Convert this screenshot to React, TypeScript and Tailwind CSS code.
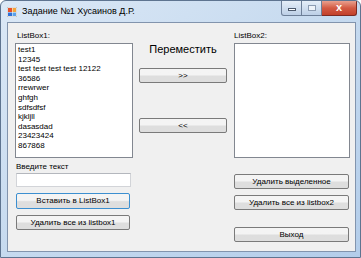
import type { ReactNode } from 'react';

const items = [
  'test1',
  '12345',
  'test test test test 12122',
  '36586',
  'rrewrwer',
  'ghfgh',
  'sdfsdfsf',
  'kjkljll',
  'dasasdad',
  '23423424',
  '867868',
];

function WinButton({ children, className = '', focused = false }: { children: ReactNode; className?: string; focused?: boolean }) {
  return (
    <div
      className={`flex items-center justify-center rounded-[2px] border bg-gradient-to-b from-[#f4f4f4] from-45% to-[#dedede] to-55% text-[8px] leading-none text-black ${
        focused ? 'border-[#3c8fd0]' : 'border-[#7a7a7a]'
      } ${className}`}
    >
      {children}
    </div>
  );
}

function AppIcon() {
  return (
    <svg width="10" height="10" viewBox="0 0 10 10">
      <rect x="0" y="0" width="10" height="10" fill="#fff" stroke="#8a8a8a" strokeWidth="0.6" />
      <rect x="1" y="1" width="4" height="4" fill="#e8502a" />
      <rect x="5.5" y="1" width="3.5" height="4" fill="#f3a43a" />
      <rect x="1" y="5.5" width="4" height="3.5" fill="#2f6fd6" />
      <rect x="5.5" y="5.5" width="3.5" height="3.5" fill="#5aa1ea" />
    </svg>
  );
}

export default function App() {
  return (
    <div
      className="flex h-[258px] w-[361px] flex-col overflow-hidden rounded-t-[6px] border border-[#5e7490] bg-gradient-to-br from-[#dbe8f6] via-[#c6daef] to-[#b3cdea]"
      style={{ fontFamily: '"Liberation Sans", Arial, sans-serif' }}
    >
      {/* title bar */}
      <div className="flex h-[21px] shrink-0 items-start">
        <div className="ml-[6px] mt-[6px]">
          <AppIcon />
        </div>
        <div className="ml-[5px] mt-[5px] text-[9px] leading-[11px] text-black">Задание №1 Хусаинов Д.Р.</div>
        <div className="ml-auto mr-[3px] flex">
          <div className="flex h-[15px] w-[21px] items-center justify-center rounded-bl-[3px] border border-t-0 border-[#6d7f98] bg-gradient-to-b from-[#e5eef8] to-[#bccfe6]">
            <div className="mt-[3px] h-[3px] w-[8px] border border-[#4c5a6e] bg-white" />
          </div>
          <div className="flex h-[15px] w-[20px] items-center justify-center border border-l-0 border-t-0 border-[#6d7f98] bg-gradient-to-b from-[#e5eef8] to-[#bccfe6]">
            <div className="h-[6px] w-[8px] border border-[#8c9cb2] bg-[#eef3f9]" />
          </div>
          <div className="flex h-[15px] w-[35px] items-center justify-center rounded-br-[3px] border border-l-0 border-t-0 border-[#7c2a22] bg-gradient-to-b from-[#e8a08e] via-[#d35a43] to-[#c2402a] pb-[1px] text-[11px] font-bold leading-none text-white">
            x
          </div>
        </div>
      </div>

      {/* client area */}
      <div className="mb-[5px] ml-[6px] mr-[4px] flex h-[230px] border border-[#8294ad] bg-[#f0f0f0] text-[8px] text-black">
        {/* left column */}
        <div className="ml-[7px] flex w-[118px] flex-col pt-[8px]">
          <div className="h-[12px] pl-[2px] leading-[10px]">ListBox1:</div>
          <div className="h-[115px] border border-[#828790] bg-white pl-[2px] pt-[1px]">
            {items.map((item) => (
              <div key={item} className="leading-[9.6px] whitespace-nowrap">
                {item}
              </div>
            ))}
          </div>
          <div className="mt-[3px] h-[12px] pl-[1px] leading-[12px]">Введите текст</div>
          <div className="ml-[1px] h-[14px] w-[115px] border border-[#d2d4d8] border-t-[#b4b7bd] bg-white" />
          <WinButton focused className="ml-[1px] mt-[6px] h-[16px] w-[114px]">
            Вставить в ListBox1
          </WinButton>
          <WinButton className="ml-[1px] mt-[6px] h-[15px] w-[114px]">Удалить все из listbox1</WinButton>
        </div>

        {/* middle column */}
        <div className="ml-[6px] flex w-[88px] flex-col pt-[19px]">
          <div className="h-[14px] text-center text-[11px] leading-[14px]">Переместить</div>
          <WinButton className="mt-[12px] h-[15px] w-[88px]">&gt;&gt;</WinButton>
          <WinButton className="mt-[35px] h-[15px] w-[88px]">&lt;&lt;</WinButton>
        </div>

        {/* right column */}
        <div className="ml-[7px] flex w-[116px] flex-col pt-[8px]">
          <div className="h-[12px] leading-[10px]">ListBox2:</div>
          <div className="h-[115px] border border-[#828790] bg-white" />
          <WinButton className="mt-[16px] h-[15px] w-[115px]">Удалить выделенное</WinButton>
          <WinButton className="mt-[6px] h-[15px] w-[115px]">Удалить все из listbox2</WinButton>
          <WinButton className="mt-[17px] h-[15px] w-[115px]">Выход</WinButton>
        </div>
      </div>
    </div>
  );
}
